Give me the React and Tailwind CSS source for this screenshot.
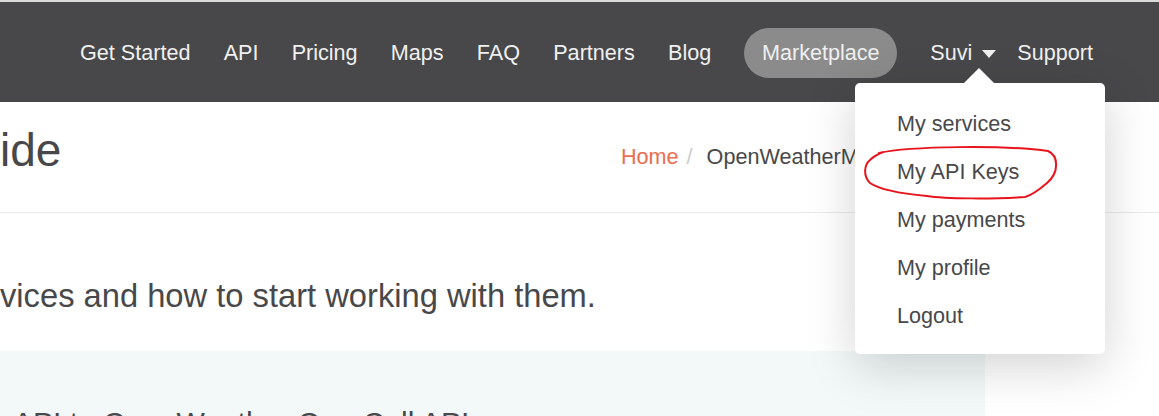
export default function App() {
  const nav = ["Get Started", "API", "Pricing", "Maps", "FAQ", "Partners", "Blog"];
  const items = ["My services", "My API Keys", "My payments", "My profile", "Logout"];
  return (
    <div className="relative w-[1159px] h-[416px] overflow-hidden bg-white font-['Liberation_Sans',Arial,sans-serif] text-[#48484a]">
      <div className="h-[2px] bg-[#dadada]" />
      <nav className="h-[100px] pt-[2px] bg-[#48484a] flex items-center pl-[80px] gap-[33.2px] text-[21.6px] leading-none text-[#f0f0f0]">
        {nav.map((n) => (
          <span key={n}>{n}</span>
        ))}
        <span className="h-[50px] px-[17.5px] rounded-full bg-[#8b8b8b] flex items-center">Marketplace</span>
        <div className="flex items-center">
          <span>Suvi</span>
          <svg className="ml-[10px] mr-[21px] mt-[2px]" width="14" height="8" viewBox="0 0 14 8">
            <polygon points="0,0 14,0 7,8" fill="#f0f0f0" />
          </svg>
          <span>Support</span>
        </div>
      </nav>

      <header className="h-[111px] border-b border-[#ebebeb] flex">
        <h1 className="w-[621px] mt-[25px] text-[46px] leading-none">ide</h1>
        <div className="mt-[44px] text-[21.6px] leading-none flex whitespace-nowrap">
          <span className="text-[#e96e50]">Home</span>
          <span className="text-[#cccccc] pl-[8px] pr-[14px]">/</span>
          <span>OpenWeatherMap API guide</span>
        </div>
      </header>

      <section className="h-[138px]">
        <p className="pt-[67px] text-[32.7px] leading-none whitespace-nowrap">
          vices and how to start working with them.
        </p>
      </section>

      <section className="w-[985px] h-[80px] bg-[#f3f9f9] pt-[57px] pl-[13px]">
        <h2 className="text-[30px] leading-none whitespace-nowrap">API to OpenWeather One Call API</h2>
      </section>

      <div className="absolute left-[855px] top-[83px] w-[250px] bg-white rounded-[5px] shadow-[0_12px_50px_rgba(0,0,0,0.18)] pt-[17px] pb-[14px] pl-[42px]">
        <div className="absolute -top-[15px] left-[109px] w-0 h-0 border-l-[15px] border-r-[15px] border-b-[15px] border-l-transparent border-r-transparent border-b-white" />
        {items.map((it) => (
          <div key={it} className="h-[48px] flex items-center text-[21.6px] leading-none">
            {it}
          </div>
        ))}
        <svg className="absolute left-0 top-0 pointer-events-none overflow-visible" width="250" height="271" viewBox="0 0 250 271">
          <path
            d="M24 70 C 55 63, 150 62, 193 68 C 204 73, 204 90, 192 100 C 185 106, 178 112, 170 114 C 140 116, 90 116, 72 113 C 50 111, 25 107, 15 100 C 8 93, 9 82, 15 77 C 18 74, 21 72, 28 69"
            fill="none"
            stroke="#e8141c"
            strokeWidth="2"
            strokeLinecap="round"
          />
        </svg>
      </div>
    </div>
  );
}
